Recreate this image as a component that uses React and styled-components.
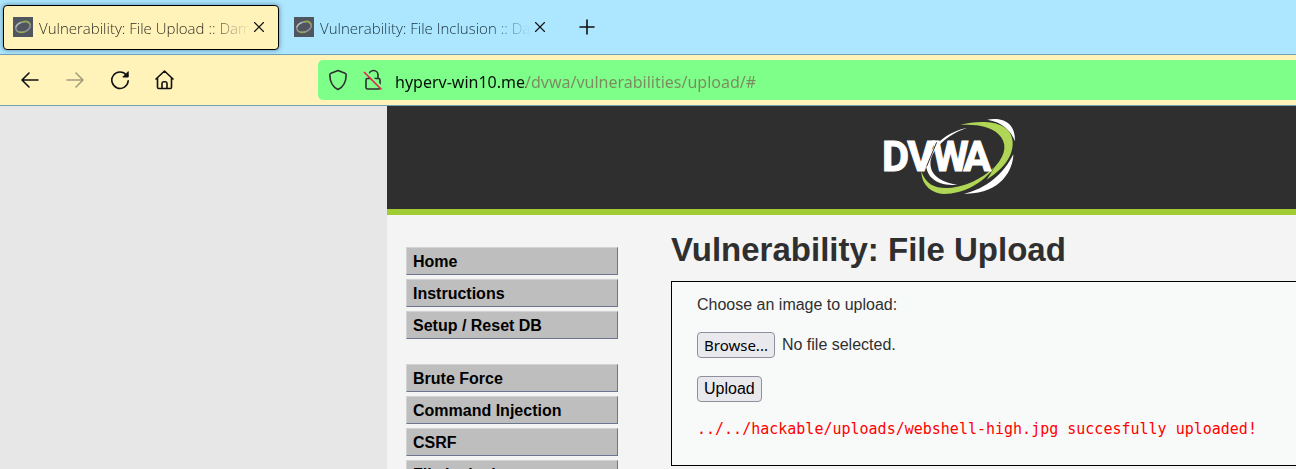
import React, { useRef, useState } from "react";
import styled, { createGlobalStyle } from "styled-components";

const GlobalStyle = createGlobalStyle`
  *, *::before, *::after { box-sizing: border-box; }
  html, body { margin: 0; padding: 0; overflow: hidden; background: #e7e7e7; }
  body { font-family: "Liberation Sans", Arial, sans-serif; font-size: 16px; color: #2f2f2f; }
  html, body, #root { height: 100%; }
  button, input { font: inherit; }
`;

const uiFont = `"Noto Sans", "Open Sans", sans-serif`;

const Window = styled.div`
  display: flex;
  flex-direction: column;
  height: 100%;
`;

const TabStrip = styled.div`
  display: flex;
  align-items: center;
  flex: none;
  height: 55px;
  padding: 0 3px;
  gap: 5px;
  background: #ade6ff;
  border-bottom: 1px solid #74a0b4;
`;

const Tab = styled.div`
  display: flex;
  align-items: center;
  width: 276px;
  height: 45px;
  padding: 0 10px 0 9px;
  border: 1px solid ${(p) => (p.$active ? "#000" : "transparent")};
  border-radius: 4px;
  background: ${(p) => (p.$active ? "#fff3ba" : "transparent")};
  box-shadow: ${(p) => (p.$active ? "0 0 5px rgba(0, 40, 60, 0.5)" : "none")};
  color: ${(p) => (p.$active ? "#2f2d22" : "#17323d")};
`;

const TabTitle = styled.span`
  flex: 1;
  min-width: 0;
  margin-left: 6px;
  padding-top: 2px;
  overflow: hidden;
  white-space: nowrap;
  font-family: "Open Sans", "Noto Sans", sans-serif;
  font-size: 15px;
  font-weight: 300;
  line-height: 24px;
  mask-image: linear-gradient(to left, transparent, #000 40px);
`;

const IconButton = styled.button`
  display: flex;
  align-items: center;
  justify-content: center;
  flex: none;
  width: ${(p) => p.$size}px;
  height: ${(p) => p.$size}px;
  padding: 0;
  border: 0;
  background: none;
  color: #111;
  &:disabled { color: #a39d7c; }
`;

const NewTab = styled(IconButton)`
  margin-left: 6px;
`;

const Toolbar = styled.div`
  display: flex;
  align-items: center;
  flex: none;
  height: 51px;
  padding-left: 15px;
  background: #fff3ba;
  border-bottom: 1px solid #74a0b4;
`;

const NavButtons = styled.div`
  display: flex;
  gap: 15px;
  flex: none;
  width: 303px;
`;

const AddressBar = styled.div`
  display: flex;
  align-items: center;
  flex: 1;
  height: 40px;
  padding-left: 9px;
  border-radius: 5px 0 0 5px;
  background: #7dff8a;
`;

const AddressIcons = styled.div`
  display: flex;
  gap: 13px;
  margin-right: 11px;
`;

const Address = styled.input`
  flex: 1;
  min-width: 0;
  height: 36px;
  padding: 4px 0 0;
  border: 0;
  outline: 0;
  font-family: ${uiFont};
  font-size: 16px;
  color: transparent;
  caret-color: #000;
  background: linear-gradient(to right, #050f06 131px, #7c8a5f 131px);
  background-clip: text;
  -webkit-background-clip: text;
`;

const Site = styled.div`
  flex: 1;
  min-height: 0;
  margin-left: 387px;
  overflow: hidden;
  background: #f4f4f4;
`;

const SiteHeader = styled.header`
  height: 109px;
  padding: 9px 0 0 493px;
  background: #2f2f2f;
  border-bottom: 6px solid #a1cc33;
`;

const Columns = styled.div`
  display: flex;
`;

const Sidebar = styled.nav`
  flex: none;
  width: 231px;
  padding: 32px 0 0 19px;
`;

const Menu = styled.ul`
  display: flex;
  flex-direction: column;
  gap: 4px;
  margin: 0 0 25px;
  padding: 0;
  list-style: none;
`;

const MenuLink = styled.a`
  display: block;
  height: 28px;
  padding: 0 6px;
  border: 1px solid;
  border-color: #d2d2d2 #6c7590 #6c7590 #d2d2d2;
  background: #bebebe;
  color: #000;
  font-weight: 700;
  line-height: 27px;
  text-decoration: none;
`;

const Main = styled.main`
  flex: 1;
  min-width: 0;
  padding: 14px 0 0 53px;
`;

const Title = styled.h1`
  margin: 0 0 10px;
  font-size: 33px;
  line-height: 42px;
  font-weight: 700;
  white-space: nowrap;
`;

const Panel = styled.form`
  display: flex;
  flex-direction: column;
  align-items: flex-start;
  height: 185px;
  padding: 10px 0 0 25px;
  border: 1px solid #000;
  border-right: 0;
  background: #f8faf9;
`;

const FileLabel = styled.label`
  margin-bottom: 15px;
  line-height: 25px;
`;

const FileRow = styled.div`
  display: flex;
  align-items: center;
  gap: 7px;
  margin-bottom: 18px;
  line-height: 20px;
`;

const HiddenFile = styled.input`
  display: none;
`;

const FormButton = styled.button`
  height: 26px;
  padding: 0 6px;
  border: 1px solid #8f8f9d;
  border-radius: 4px;
  background: #e9e9ed;
  color: #000;
  font-family: ${(p) => (p.$ui ? uiFont : "inherit")};
  font-size: ${(p) => (p.$ui ? 15 : 16)}px;
  line-height: 24px;
`;

const Result = styled.pre`
  margin: 15px 0 0;
  color: #f00;
  font-family: "DejaVu Sans Mono", monospace;
  font-size: 15px;
  line-height: 24px;
`;

const Stroke = ({ size, children, width = 1.6 }) => (
  <svg width={size} height={size} viewBox={`0 0 ${size} ${size}`} fill="none" stroke="currentColor"
    strokeWidth={width} strokeLinecap="round" strokeLinejoin="round" aria-hidden="true">
    {children}
  </svg>
);

const Favicon = () => (
  <svg width="20" height="20" viewBox="0 0 20 20" aria-hidden="true">
    <rect width="20" height="20" fill="#51555f" />
    <g fill="none" transform="rotate(-20 10 10)">
      <ellipse cx="10" cy="10" rx="7.500" ry="5" stroke="#8f9698" strokeWidth="1.500" />
      <path d="M3 8c1-2 4-3 7-3" stroke="#b4bcb8" strokeWidth="1.300" />
      <path d="M11 5c4 0 6.500 2 6.500 5M4 13c1.500 1.500 4 2 6 2" stroke="#93a850" strokeWidth="1.500" />
    </g>
  </svg>
);

const Logo = () => (
  <svg width="140" height="84" viewBox="30 30 420 252" role="img" aria-label="DVWA">
    <path d="M270 60C330 44 425 43 428 112C430 160 390 200 350 224L376 184C410 145 412 112 384 86C360 64 318 56 270 60Z" fill="#b0d655" />
    <path d="M352 44C400 36 437 55 435 109C423 77 396 51 352 44Z" fill="#fff" />
    <path d="M430 148C430 195 390 270 282 266C345 254 402 206 430 148Z" fill="#fff" />
    <path d="M154 198C168 244 205 253 246 248C310 240 350 207 376 184C340 235 280 267 222 267C176 264 154 232 154 198Z" fill="#b0d655" />
    <path d="M293 68C235 79 184 118 168 170C166 224 210 242 262 240C210 231 176 209 182 166C192 120 245 83 293 68Z" fill="#fff" />
    <text x="36 112 187 280" y="198" fill="#fff" stroke="#fff" strokeWidth="3" fontFamily="Roboto, sans-serif" fontSize="125" fontWeight="700">
      DVWA
    </text>
    <path d="M200 112L170 184" stroke="#2f2f2f" strokeWidth="3" />
  </svg>
);

const CloseIcon = () => (
  <Stroke size={12} width={1.1}><path d="M1.500 1.500l9 9M10.500 1.500l-9 9" /></Stroke>
);

const BrowserTab = ({ title, active }) => (
  <Tab $active={active} role="tab" aria-selected={!!active}>
    <Favicon />
    <TabTitle>{title}</TabTitle>
    <IconButton $size={18} aria-label="Close tab"><CloseIcon /></IconButton>
  </Tab>
);

const menus = [
  ["Home", "Instructions", "Setup / Reset DB"],
  ["Brute Force", "Command Injection", "CSRF", "File Inclusion"],
];

export default function App() {
  const picker = useRef(null);
  const [file, setFile] = useState("No file selected.");
  return (
    <Window>
      <GlobalStyle />
      <TabStrip role="tablist">
        <BrowserTab active title="Vulnerability: File Upload :: Damn" />
        <BrowserTab title="Vulnerability: File Inclusion :: Damn" />
        <NewTab $size={32} aria-label="New tab">
          <Stroke size={16}><path d="M8 1v14M1 8h14" /></Stroke>
        </NewTab>
      </TabStrip>
      <Toolbar>
        <NavButtons>
          <IconButton $size={30} aria-label="Back">
            <Stroke size={20}><path d="M18 10H2M9 3l-7 7 7 7" /></Stroke>
          </IconButton>
          <IconButton $size={30} aria-label="Forward" disabled>
            <Stroke size={20}><path d="M2 10h16M11 3l7 7-7 7" /></Stroke>
          </IconButton>
          <IconButton $size={30} aria-label="Reload">
            <Stroke size={20} width={1.6}>
              <path d="M16.500 5.200A8.200 8.200 0 1 0 18.200 10.800" />
              <path d="M18.200 2v5h-5z" fill="currentColor" strokeWidth="1" />
            </Stroke>
          </IconButton>
          <IconButton $size={30} aria-label="Home">
            <Stroke size={20}>
              <path d="M1 9L9.500 1 18 9M2.500 8v9.200c0 .8.500 1.300 1.300 1.300h11.400c.8 0 1.300-.5 1.300-1.300V8M7 18.200v-4.700c0-1 .6-1.700 1.500-1.700h2c.9 0 1.500.7 1.500 1.700v4.700" />
            </Stroke>
          </IconButton>
        </NavButtons>
        <AddressBar>
          <AddressIcons>
            <Stroke size={22}>
              <path d="M11 1.500l7 2.700c.8.300 1.200.9 1.200 1.700-.1 6-2 11.500-8.200 14.600C4.800 17.400 2.900 11.900 2.800 5.900c0-.8.400-1.400 1.200-1.700z" />
            </Stroke>
            <Stroke size={22}>
              <path d="M7 9V6a4.500 4.500 0 0 1 9 0v3M5.500 9.500h11c1 0 1.500.6 1.500 1.500v7.500c0 1-.5 1.500-1.500 1.500h-11C4.500 20 4 19.500 4 18.500V11c0-.9.500-1.500 1.500-1.500z" />
              <path d="M4.500 3.500l15 15" stroke="#7dff8a" strokeWidth="3" />
              <path d="M2.500 3.500l16.500 16.500" stroke="#e22850" strokeWidth="1.700" />
            </Stroke>
          </AddressIcons>
          <Address aria-label="Address" defaultValue="hyperv-win10.me/dvwa/vulnerabilities/upload/#" spellCheck={false} />
        </AddressBar>
      </Toolbar>
      <Site>
        <SiteHeader><Logo /></SiteHeader>
        <Columns>
          <Sidebar>
            {menus.map((items) => (
              <Menu key={items[0]}>
                {items.map((item) => (
                  <li key={item}><MenuLink href="#">{item}</MenuLink></li>
                ))}
              </Menu>
            ))}
          </Sidebar>
          <Main>
            <Title>Vulnerability: File Upload</Title>
            <Panel onSubmit={(e) => e.preventDefault()}>
              <FileLabel htmlFor="image">Choose an image to upload:</FileLabel>
              <FileRow>
                <HiddenFile id="image" ref={picker} type="file" accept="image/*"
                  onChange={(e) => setFile(e.target.files[0]?.name ?? "No file selected.")} />
                <FormButton type="button" $ui onClick={() => picker.current.click()}>Browse...</FormButton>
                <span>{file}</span>
              </FileRow>
              <FormButton type="submit">Upload</FormButton>
              <Result>../../hackable/uploads/webshell-high.jpg succesfully uploaded!</Result>
            </Panel>
          </Main>
        </Columns>
      </Site>
    </Window>
  );
}
